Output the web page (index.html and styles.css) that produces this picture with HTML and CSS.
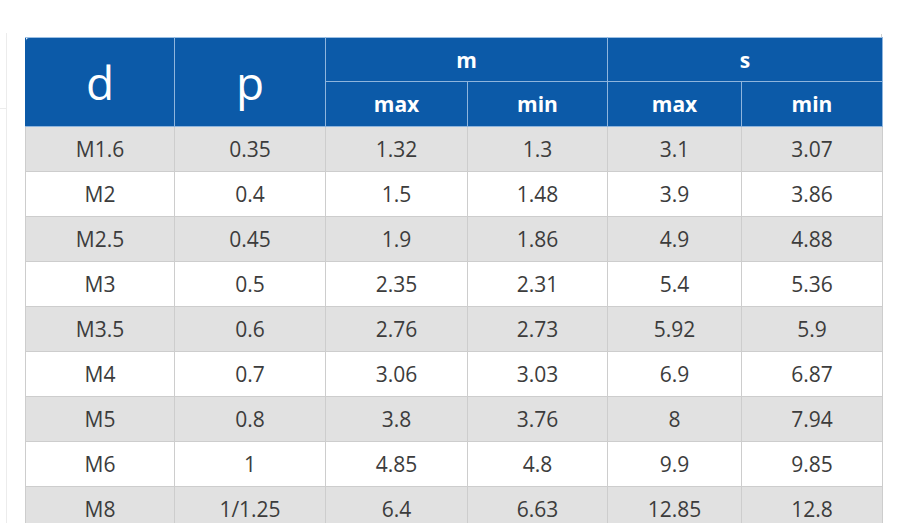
FILE: index.html
```html
<!DOCTYPE html>
<html>
<head>
<meta charset="utf-8">
<link rel="stylesheet" href="styles.css">
</head>
<body>
<div class="side"><div class="side-top"></div></div>
<main class="main">
<div class="wrap">
<table class="spec">
<colgroup>
<col class="c1"><col class="c2"><col class="c3"><col class="c4"><col class="c5"><col class="c6">
</colgroup>
<thead>
<tr class="h1">
<th rowspan="2" class="big first">d</th>
<th rowspan="2" class="big">p</th>
<th colspan="2">m</th>
<th colspan="2">s</th>
</tr>
<tr class="h2">
<th>max</th><th>min</th><th>max</th><th>min</th>
</tr>
</thead>
<tbody>
<tr class="g"><td>M1.6</td><td>0.35</td><td>1.32</td><td>1.3</td><td>3.1</td><td>3.07</td></tr>
<tr><td>M2</td><td>0.4</td><td>1.5</td><td>1.48</td><td>3.9</td><td>3.86</td></tr>
<tr class="g"><td>M2.5</td><td>0.45</td><td>1.9</td><td>1.86</td><td>4.9</td><td>4.88</td></tr>
<tr><td>M3</td><td>0.5</td><td>2.35</td><td>2.31</td><td>5.4</td><td>5.36</td></tr>
<tr class="g"><td>M3.5</td><td>0.6</td><td>2.76</td><td>2.73</td><td>5.92</td><td>5.9</td></tr>
<tr><td>M4</td><td>0.7</td><td>3.06</td><td>3.03</td><td>6.9</td><td>6.87</td></tr>
<tr class="g"><td>M5</td><td>0.8</td><td>3.8</td><td>3.76</td><td>8</td><td>7.94</td></tr>
<tr><td>M6</td><td>1</td><td>4.85</td><td>4.8</td><td>9.9</td><td>9.85</td></tr>
<tr class="g"><td>M8</td><td>1/1.25</td><td>6.4</td><td>6.63</td><td>12.85</td><td>12.8</td></tr>
</tbody>
</table>
</div>
</main>
</body>
</html>
```
FILE: styles.css
```css
html, body {
  margin: 0;
  padding: 0;
  background: #fff;
  height: 100%;
  overflow: hidden;
}
body {
  display: flex;
  font-family: "Open Sans", "Noto Sans", sans-serif;
}
.side {
  width: 6px;
  margin-top: 33px;
  border-right: 1px solid #ececec;
  flex: none;
}
.side-top {
  height: 75px;
  border-bottom: 1px solid #ececec;
}
.main {
  margin-left: 18px;
  padding-top: 34px;
}
.wrap {
  padding-top: 3px;
  border-right: 1px solid #cfcfcf;
  width: 856px;
}
.spec {
  border-collapse: collapse;
  table-layout: fixed;
  width: 857px;
  margin-right: -1px;
}
.c1 { width: 149px; }
.c2 { width: 151px; }
.c3 { width: 142px; }
.c4 { width: 140px; }
.c5 { width: 134px; }
.c6 { width: 141px; }
.spec th {
  background: #0c5aa8;
  color: #fff;
  font-weight: 700;
  font-size: 21px;
  border: 1px solid #8fb5dd;
  padding: 0;
  text-align: center;
  vertical-align: middle;
}
.spec thead tr:first-child th {
  border-top-color: #9cc0e4;
}
.spec th.first {
  border-left-color: #0c5aa8;
  border-top-left-radius: 3px;
}
.spec th.big {
  font-size: 46px;
  font-weight: 400;
  line-height: 1.36;
  padding-bottom: 0;
}
.h1 th { height: 43px; }
.h2 th { height: 44px; }
.spec td {
  height: 44px;
  padding: 0;
  border: 1px solid #cdcdcd;
  text-align: center;
  vertical-align: middle;
  font-size: 21px;
  color: #3c3c3c;
  background: #fff;
}
.spec tr.g td {
  background: #e1e1e1;
}
```
